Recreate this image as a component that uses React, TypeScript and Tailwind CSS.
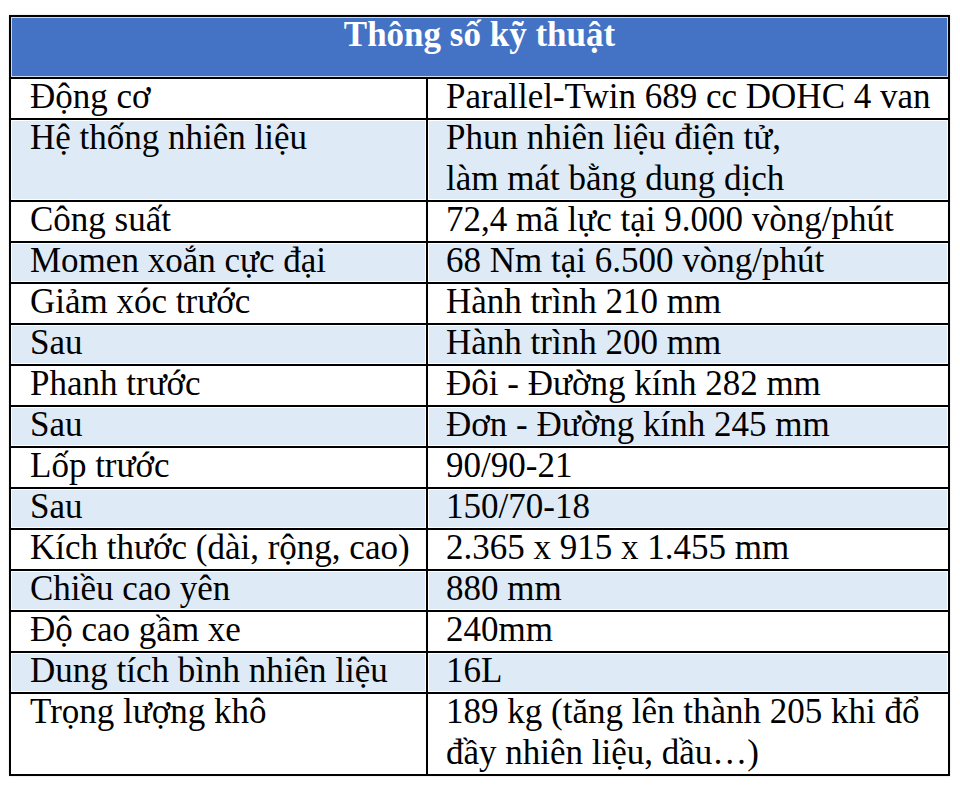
const rows: { label: string; value: string[] }[] = [
  { label: 'Động cơ', value: ['Parallel-Twin 689 cc DOHC 4 van'] },
  { label: 'Hệ thống nhiên liệu', value: ['Phun nhiên liệu điện tử,', 'làm mát bằng dung dịch'] },
  { label: 'Công suất', value: ['72,4 mã lực tại 9.000 vòng/phút'] },
  { label: 'Momen xoắn cực đại', value: ['68 Nm tại 6.500 vòng/phút'] },
  { label: 'Giảm xóc trước', value: ['Hành trình 210 mm'] },
  { label: 'Sau', value: ['Hành trình 200 mm'] },
  { label: 'Phanh trước', value: ['Đôi - Đường kính 282 mm'] },
  { label: 'Sau', value: ['Đơn - Đường kính 245 mm'] },
  { label: 'Lốp trước', value: ['90/90-21'] },
  { label: 'Sau', value: ['150/70-18'] },
  { label: 'Kích thước (dài, rộng, cao)', value: ['2.365 x 915 x 1.455 mm'] },
  { label: 'Chiều cao yên', value: ['880 mm'] },
  { label: 'Độ cao gầm xe', value: ['240mm'] },
  { label: 'Dung tích bình nhiên liệu', value: ['16L'] },
  { label: 'Trọng lượng khô', value: ['189 kg (tăng lên thành 205 khi đổ', 'đầy nhiên liệu, dầu…)'] },
];

const App = () => {
  return (
    <div className="min-h-[786px] bg-white pt-[15px] pl-[9px] font-['Liberation_Serif',serif] text-black">
      <div className="w-[941px] border-2 border-black shadow-[0_0_2px_rgba(0,0,0,0.15)]">
        <div className="h-[60px] bg-[#4472c4] text-center text-[35px] font-bold leading-[36px] text-white shadow-[inset_0_0_0_1px_#cfd9ee]">
          Thông số kỹ thuật
        </div>
        {rows.map((row, i) => {
          const shaded = i % 2 === 1;
          const h = row.value.length === 2 ? 'h-[82px]' : 'h-[41px]';
          const cell = shaded
            ? 'bg-[#deeaf6] shadow-[inset_0_0_0_1px_#ffffff]'
            : 'bg-white';
          return (
            <div key={i} className={`flex border-t-2 border-black ${h}`}>
              <div className={`w-[415px] shrink-0 pl-[19px] text-[35px] leading-[35px] whitespace-nowrap ${cell}`}>
                {row.label}
              </div>
              <div className={`flex-1 border-l-2 border-black pl-[18px] text-[35px] leading-[35px] whitespace-nowrap ${cell}`}>
                {row.value.map((v, j) => (
                  <div key={j} className={j > 0 ? 'mt-[6px]' : ''}>
                    {v}
                  </div>
                ))}
              </div>
            </div>
          );
        })}
      </div>
    </div>
  );
};

export default App;
